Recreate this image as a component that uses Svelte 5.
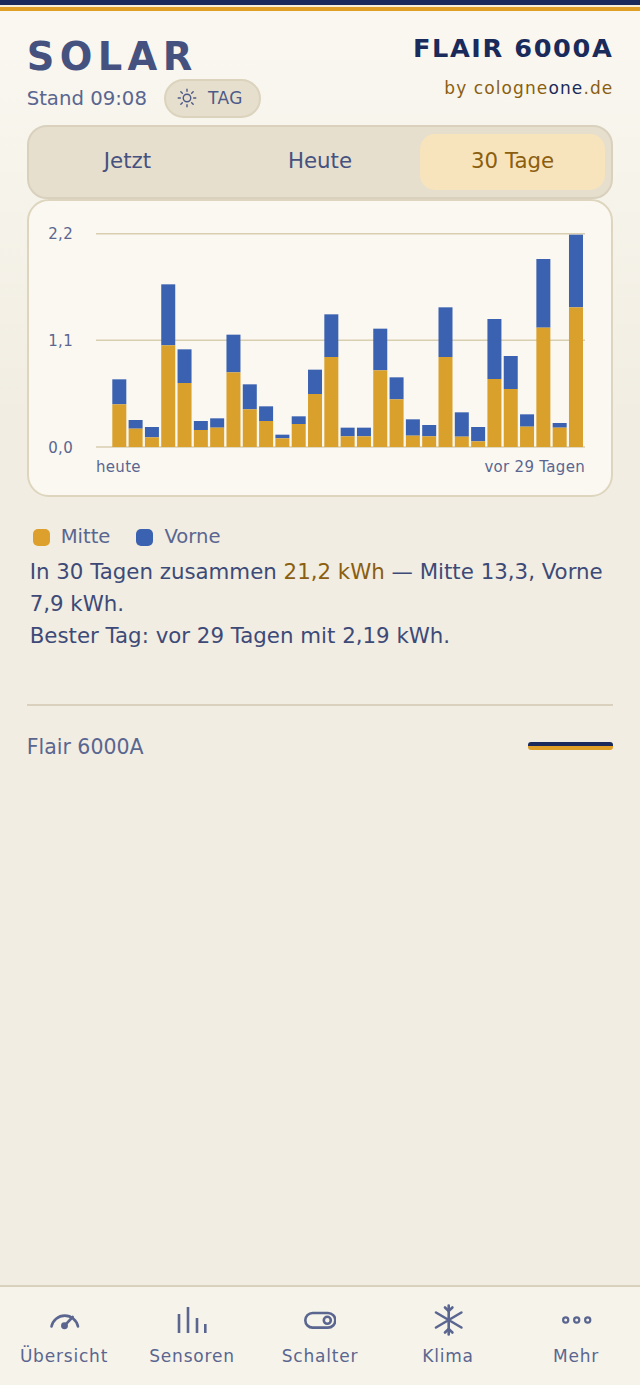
<script>
    // top / split of every bar, read in 1/3 px, measured from y=215 on the page
    const raw = [
        [493, 568], [615, 641], [636, 667], [208, 391], [403, 504], [618, 645],
        [610, 638], [359, 472], [508, 583], [574, 618], [659, 670], [604, 627],
        [464, 537], [298, 426], [638, 664], [638, 664], [341, 466], [487, 553],
        [613, 662], [630, 664], [277, 426], [592, 665], [636, 679], [312, 492],
        [423, 522], [598, 635], [132, 338], [624, 638], [59, 277]
    ];
    const base = 246;
    const bars = raw.map(([top, split], i) => ({
        x: 83.3 + i * 16.31,
        top: top / 3 + 14,
        split: split / 3 + 14
    }));
    const ticks = [
        { y: 32.7, label: "2,2" },
        { y: 139.3, label: "1,1" },
        { y: 246, label: "0,0" }
    ];
    const tabs = ["Jetzt", "Heute", "30 Tage"];
    let active = $state(2);
</script>

<div class="page">
    <div class="stripe"></div>

    <main class="content">
        <header class="head">
            <div class="head-left">
                <h1>SOLAR</h1>
                <div class="status">
                    <span class="stand">Stand 09:08</span>
                    <span class="pill">
                        <svg viewBox="0 0 24 24" fill="none" stroke="currentColor" stroke-width="1.7" stroke-linecap="round">
                            <circle cx="12" cy="12" r="4.500"></circle>
                            <path d="M12 1.500v2.500M12 20v2.500M1.500 12H4M20 12h2.500M4.600 4.600l1.800 1.800M17.600 17.600l1.800 1.800M4.600 19.400l1.800-1.800M17.600 6.400l1.800-1.800"></path>
                        </svg>
                        TAG
                    </span>
                </div>
            </div>
            <div class="head-right">
                <div class="model">FLAIR 6000A</div>
                <div class="by">by cologne<span class="one">one</span>.de</div>
            </div>
        </header>

        <div class="tabs">
            {#each tabs as tab, i}
                <button class="tab" class:active={active === i} onclick={() => (active = i)}>{tab}</button>
            {/each}
        </div>

        <section class="card">
            <svg class="chart" viewBox="0 0 582 294" width="582" height="294">
                {#each ticks as t}
                    <line x1="67" x2="556" y1={t.y} y2={t.y} class="grid"></line>
                    <text x="44" y={t.y + 5.5} text-anchor="end" class="axis">{t.label}</text>
                {/each}
                {#each bars as b}
                    <rect x={b.x} y={b.top} width="14" height={b.split - b.top} fill="#3b62b0"></rect>
                    <rect x={b.x} y={b.split} width="14" height={base - b.split} fill="#d9a02c"></rect>
                {/each}
                <text x="67" y="271" class="axis">heute</text>
                <text x="556" y="271" text-anchor="end" class="axis">vor 29 Tagen</text>
            </svg>
        </section>

        <div class="legend">
            <span class="key"><i class="dot mid"></i>Mitte</span>
            <span class="key"><i class="dot front"></i>Vorne</span>
        </div>

        <p class="summary">
            In 30 Tagen zusammen <span class="hl">21,2 kWh</span> — Mitte 13,3, Vorne 7,9 kWh.<br />
            Bester Tag: vor 29 Tagen mit 2,19 kWh.
        </p>

        <footer class="foot">
            <span>Flair 6000A</span>
            <span class="flag"></span>
        </footer>
    </main>

    <nav class="nav">
        <a class="item" href="#uebersicht">
            <svg viewBox="0 0 32 32" fill="none" stroke="currentColor" stroke-width="2.6" stroke-linecap="round">
                <path d="M3.500 22.500A13.500 13.500 0 0 1 30 22.500"></path>
                <path d="M16.500 21.700 24.700 13"></path>
                <circle cx="16.500" cy="21.700" r="2.700" fill="currentColor" stroke-width="1.500"></circle>
            </svg>
            Übersicht
        </a>
        <a class="item" href="#sensoren">
            <svg viewBox="0 0 32 32" fill="none" stroke="currentColor" stroke-width="2.600">
                <path d="M3 10V29M12 3V29M21 14V29M29.300 20V29"></path>
            </svg>
            Sensoren
        </a>
        <a class="item" href="#schalter">
            <svg viewBox="0 0 32 32" fill="none" stroke="currentColor" stroke-width="2.600">
                <rect x="1.300" y="9" width="30" height="14.600" rx="7.300"></rect>
                <circle cx="23.300" cy="16.300" r="3.500"></circle>
            </svg>
            Schalter
        </a>
        <a class="item" href="#klima">
            <svg viewBox="0 0 32 32" fill="none" stroke="currentColor" stroke-width="2.600" stroke-linecap="round" stroke-linejoin="round">
                <path d="M16.700 1.500V30.500M4 8.500 29.400 23.500M4 23.500 29.400 8.500"></path>
                <path d="M13 3.500 16.700 7 20.400 3.500M13 28.500 16.700 25 20.400 28.500"></path>
            </svg>
            Klima
        </a>
        <a class="item" href="#mehr">
            <svg viewBox="0 0 32 32" fill="none" stroke="currentColor" stroke-width="2.200">
                <circle cx="5.700" cy="16" r="2.600"></circle>
                <circle cx="16.700" cy="16" r="2.600"></circle>
                <circle cx="27.700" cy="16" r="2.600"></circle>
            </svg>
            Mehr
        </a>
    </nav>
</div>

<style>
    :global(body) {
        margin: 0;
        background: #f1ede2;
    }

    * {
        box-sizing: border-box;
    }

    .page {
        min-height: 100vh;
        display: flex;
        flex-direction: column;
        font-family: "DejaVu Sans", sans-serif;
        color: #3d4a78;
        background: linear-gradient(to bottom, #faf8f1 0, #f1ede2 420px);
    }

    .stripe {
        height: 11px;
        background: linear-gradient(to bottom, #1a2a5a 0 5px, #f6efdc 5px 7px, #e0a028 7px 11px);
    }

    .content {
        flex: 1;
        padding: 0 26.67px;
        display: flex;
        flex-direction: column;
    }

    .head {
        display: flex;
        justify-content: space-between;
        align-items: flex-start;
    }

    h1 {
        margin: 23px 0 0;
        font-size: 38.4px;
        line-height: 46px;
        font-weight: 700;
        letter-spacing: 5.4px;
        color: #45517f;
    }

    .status {
        display: flex;
        align-items: center;
        gap: 17px;
        margin-top: -1px;
    }

    .stand {
        font-size: 19.7px;
        color: #5a6690;
    }

    .pill {
        display: inline-flex;
        align-items: center;
        gap: 11px;
        height: 39px;
        padding: 0 16px 1px 11px;
        border: 2px solid #dcd3bd;
        border-radius: 20px;
        background: #e6dfce;
        font-size: 17px;
        letter-spacing: 0.5px;
        color: #4d5a88;
    }

    .pill svg {
        width: 20px;
        height: 20px;
    }

    .head-right {
        text-align: right;
        margin-top: 22px;
    }

    .model {
        font-size: 25.6px;
        line-height: 30px;
        font-weight: 700;
        letter-spacing: 1.6px;
        color: #1a2a5a;
    }

    .by {
        margin-top: 14px;
        font-size: 17px;
        line-height: 22px;
        letter-spacing: 1.1px;
        color: #8b5e10;
    }

    .one {
        color: #1a2a5a;
    }

    .tabs {
        margin-top: 7px;
        height: 74px;
        padding: 7px 6px;
        border: 2px solid #d9d1bd;
        border-radius: 20px;
        background: #e6dfce;
        display: grid;
        grid-template-columns: repeat(3, 1fr);
        gap: 7px;
    }

    .tab {
        border: 0;
        border-radius: 15px;
        padding: 0 0 4px;
        background: transparent;
        font: inherit;
        font-size: 21.33px;
        color: #45517f;
        cursor: pointer;
    }

    .tab.active {
        background: #f7e4bd;
        color: #8b5e10;
    }

    .card {
        height: 298px;
        border: 2px solid #ddd5bd;
        border-radius: 22px;
        background: #fbf8f1;
    }

    .chart {
        display: block;
    }

    .grid {
        stroke: #d9ceb0;
        stroke-width: 1.5;
    }

    .axis {
        font-size: 15px;
        fill: #5a6690;
        letter-spacing: 0.3px;
    }

    .legend {
        display: flex;
        gap: 26px;
        margin: 26px 0 0 6px;
        font-size: 19.6px;
        line-height: 28px;
        color: #5a6690;
    }

    .key {
        display: flex;
        align-items: center;
        gap: 11px;
    }

    .dot {
        width: 17px;
        height: 17px;
        border-radius: 5px;
    }

    .mid {
        background: #dda02c;
    }

    .front {
        background: #3b62b0;
    }

    .summary {
        margin: 5px 0 0 3px;
        font-size: 21.33px;
        line-height: 32px;
        color: #3d4a78;
    }

    .hl {
        color: #8b5e10;
    }

    .foot {
        margin-top: 52px;
        padding-top: 29px;
        border-top: 2px solid #d9d1bd;
        display: flex;
        justify-content: space-between;
        align-items: center;
        font-size: 20.5px;
        color: #5a6690;
    }

    .flag {
        width: 85px;
        height: 8px;
        margin-top: -3px;
        border-radius: 3px;
        background: linear-gradient(to bottom, #1a2a5a 0 4px, #e0a028 4px 8px);
    }

    .nav {
        height: 100px;
        border-top: 2px solid #d9d1bd;
        background: #f6f3ea;
        display: grid;
        grid-template-columns: repeat(5, 1fr);
    }

    .item {
        display: flex;
        flex-direction: column;
        align-items: center;
        gap: 9px;
        padding-top: 17px;
        font-size: 17px;
        line-height: 22px;
        letter-spacing: 0.8px;
        color: #5a6690;
        text-decoration: none;
    }

    .item svg {
        width: 32px;
        height: 32px;
    }
</style>
